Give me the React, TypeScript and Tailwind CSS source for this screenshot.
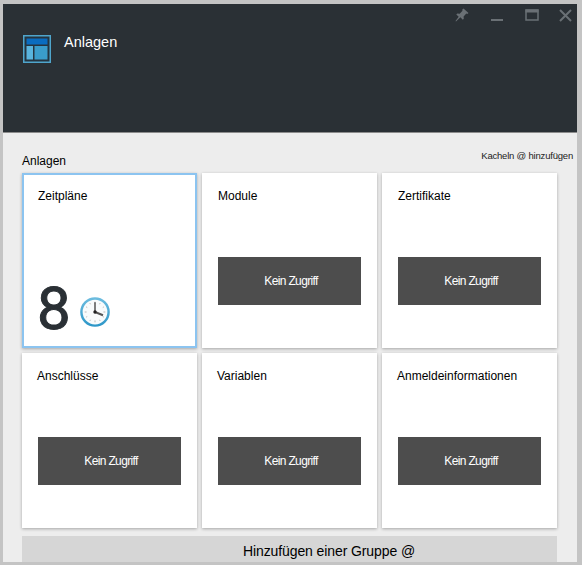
import React from "react";

function Tile({ title, selected, nudge, children }: { title: string; selected?: boolean; nudge?: boolean; children?: React.ReactNode }) {
  return (
    <div className={selected
      ? "relative flex h-[175px] w-[175px] flex-col bg-white border-2 border-[#8cc4f0] pl-[14px] pt-[14px] shadow-[0_1px_3px_rgba(0,0,0,0.3)]"
      : "relative flex h-[175px] w-[175px] flex-col bg-white pl-4 pt-4 shadow-[0_1px_3px_rgba(0,0,0,0.3)]"}>
      <div className={nudge ? "-ml-px text-[12px] leading-[14px] text-black" : "text-[12px] leading-[14px] text-black"}>{title}</div>
      {children}
    </div>
  );
}

function NoAccess() {
  return (
    <div className="mt-[54px] flex h-12 w-[143px] items-center justify-center bg-[#4d4d4d] pl-[3px] text-[12px] tracking-[-0.65px] text-white">
      Kein Zugriff
    </div>
  );
}

function Clock() {
  return (
    <svg width="30" height="30" viewBox="0 0 32 32" className="ml-[9px] mt-[18px]">
      <defs>
        <linearGradient id="clockRing" x1="0" y1="0" x2="0" y2="1">
          <stop offset="0" stopColor="#6cbcdf" />
          <stop offset="1" stopColor="#2e97c8" />
        </linearGradient>
      </defs>
      <circle cx="16" cy="16" r="14.5" fill="#f8fbfc" stroke="url(#clockRing)" strokeWidth="2.6" />
      <g stroke="#b5b5b5" strokeWidth="1">
        <path d="M16 5v2M16 25v2M5 16h2M25 16h2M10.5 6.5l.7 1.2M21.5 6.5l-.7 1.2M6.5 10.5l1.2.7M25.5 10.5l-1.2.7M6.5 21.5l1.2-.7M25.5 21.5l-1.2-.7M10.5 25.5l.7-1.2M21.5 25.5l-.7-1.2" />
      </g>
      <path d="M16 16V5.5" stroke="#555" strokeWidth="1.6" />
      <path d="M16 16l8.5 3.4" stroke="#555" strokeWidth="2.2" />
      <circle cx="16" cy="16" r="1.8" fill="#222" />
    </svg>
  );
}

export default function App() {
  return (
    <div className="h-[565px] w-[582px] overflow-hidden bg-[#c4c4c4] pb-[3px] pl-[3px] pr-[5px] pt-1 font-['Liberation_Sans',Arial,sans-serif]">
      <div className="flex h-full flex-col bg-[#ededed]">
        <header className="relative flex h-[129px] shrink-0 items-start border-b border-[#8c8c8c] bg-[#2a3035] pl-5 pt-[31px]">
          <svg width="28" height="28" viewBox="0 0 28 28" className="shrink-0">
            <rect x="0.75" y="0.75" width="26.5" height="26.5" fill="#253440" stroke="#4fa5cc" strokeWidth="1.5" />
            <rect x="3.5" y="3.5" width="21" height="6" fill="#0a6cc0" />
            <rect x="3.5" y="11" width="6.5" height="13.5" fill="#59b4de" />
            <rect x="11.5" y="11" width="13" height="13.5" fill="#3a9ccb" />
          </svg>
          <div className="ml-[13px] text-[14.5px] leading-[14px] text-white">Anlagen</div>
          <div className="absolute right-[5px] top-[4px] flex items-center text-[#6a7075]">
            <svg width="14" height="14" viewBox="0 0 14 14" fill="currentColor">
              <path d="M8.5 0.5l5 4.5-1.2 1-1-.5-2.7 3 .2 2.3-1 1-2.4-2.6L1 13.5l-.5-.5 3.2-4.2-2.4-2.3 1-1 2.4.2 2.8-3-.3-1z" />
            </svg>
            <svg width="12" height="14" viewBox="0 0 12 14" fill="currentColor" className="ml-[22px]">
              <rect x="0" y="11" width="12" height="2" />
            </svg>
            <svg width="14" height="12" viewBox="0 0 14 12" fill="none" className="ml-[22px]">
              <rect x="1" y="1" width="12" height="10" stroke="currentColor" strokeWidth="1.5" />
              <rect x="0.5" y="0.5" width="13" height="3" fill="currentColor" />
            </svg>
            <svg width="13" height="13" viewBox="0 0 13 13" fill="none" stroke="currentColor" strokeWidth="2" className="ml-[20px]">
              <path d="M1 1l11 11M12 1L1 12" />
            </svg>
          </div>
        </header>
        <main className="flex min-h-0 flex-1 flex-col pl-[19px]">
          <div className="flex h-[41px] items-end justify-between pr-1">
            <span className="pb-[5px] text-[12px] leading-[14px] text-black">Anlagen</span>
            <span className="pb-[12px] text-[9.5px] leading-[11px] tracking-[-0.2px] text-[#222]">Kacheln @ hinzufügen</span>
          </div>
          <div className="grid w-[535px] grid-cols-[175px_175px_175px] gap-[5px]">
            <Tile title="Zeitpläne" selected>
              <div className="mt-[76px] flex items-start">
                <span className="-ml-px font-['Roboto',sans-serif] text-[60px] leading-[60px] text-[#2a3035] [-webkit-text-stroke:1px_#2a3035]">8</span>
                <Clock />
              </div>
            </Tile>
            <Tile title="Module"><NoAccess /></Tile>
            <Tile title="Zertifikate"><NoAccess /></Tile>
            <Tile title="Anschlüsse" nudge><NoAccess /></Tile>
            <Tile title="Variablen" nudge><NoAccess /></Tile>
            <Tile title="Anmeldeinformationen" nudge><NoAccess /></Tile>
          </div>
          <div className="mt-2 flex h-[26px] w-[535px] items-center justify-center bg-[#d6d6d6] pl-[79px] pt-1 text-[14px] tracking-[-0.1px] text-black">
            Hinzufügen einer Gruppe @
          </div>
        </main>
      </div>
    </div>
  );
}
